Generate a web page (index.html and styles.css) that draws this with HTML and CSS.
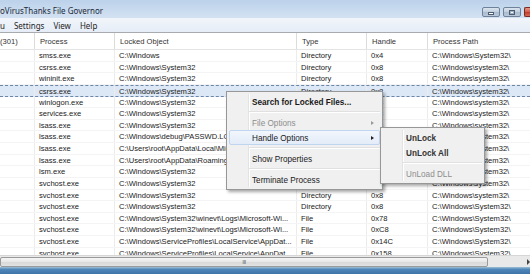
FILE: index.html
```html
<!DOCTYPE html>
<html lang="en">
<head>
    <meta charset="UTF-8">
    <title>VirusThanks File Governor</title>
    <link rel="stylesheet" href="styles.css">
</head>
<body>
    <div class="window">
        <div class="titlebar">
            <span class="title">oVirusThanks File Governor</span>
            <div class="winbtns">
                <span class="winbtn min"><i></i></span>
                <span class="winbtn max"><i></i></span>
                <span class="winbtn close"></span>
            </div>
        </div>
        <div class="menubar">
            <span class="menu-item first">u</span>
            <span class="menu-item">Settings</span>
            <span class="menu-item">View</span>
            <span class="menu-item">Help</span>
        </div>

        <div class="grid">
            <div class="row header">
                <span class="cell">(301)</span>
                <span class="cell">Process</span>
                <span class="cell">Locked Object</span>
                <span class="cell">Type</span>
                <span class="cell">Handle</span>
                <span class="cell">Process Path</span>
            </div>
            <div class="rows">
                <div class="row"><span class="cell"></span><span class="cell">smss.exe</span><span class="cell">C:\Windows</span><span class="cell">Directory</span><span class="cell">0x4</span><span class="cell">C:\Windows\System32\</span></div>
                <div class="row"><span class="cell"></span><span class="cell">csrss.exe</span><span class="cell">C:\Windows\System32</span><span class="cell">Directory</span><span class="cell">0x8</span><span class="cell">C:\Windows\system32\</span></div>
                <div class="row"><span class="cell"></span><span class="cell">wininit.exe</span><span class="cell">C:\Windows\System32</span><span class="cell">Directory</span><span class="cell">0x8</span><span class="cell">C:\Windows\system32\</span></div>
                <div class="row selected"><span class="cell"></span><span class="cell">csrss.exe</span><span class="cell">C:\Windows\System32</span><span class="cell">Directory</span><span class="cell">0x8</span><span class="cell">C:\Windows\system32\</span></div>
                <div class="row"><span class="cell"></span><span class="cell">winlogon.exe</span><span class="cell">C:\Windows\System32</span><span class="cell">Directory</span><span class="cell">0x8</span><span class="cell">C:\Windows\system32\</span></div>
                <div class="row"><span class="cell"></span><span class="cell">services.exe</span><span class="cell">C:\Windows\System32</span><span class="cell">Directory</span><span class="cell">0x8</span><span class="cell">C:\Windows\system32\</span></div>
                <div class="row"><span class="cell"></span><span class="cell">lsass.exe</span><span class="cell">C:\Windows\System32</span><span class="cell">Directory</span><span class="cell">0x8</span><span class="cell">C:\Windows\system32\</span></div>
                <div class="row"><span class="cell"></span><span class="cell">lsass.exe</span><span class="cell">C:\Windows\debug\PASSWD.LOG</span><span class="cell">File</span><span class="cell">0x1C</span><span class="cell">C:\Windows\system32\</span></div>
                <div class="row"><span class="cell"></span><span class="cell">lsass.exe</span><span class="cell">C:\Users\root\AppData\Local\Microsoft</span><span class="cell">Directory</span><span class="cell">0x2C</span><span class="cell">C:\Windows\system32\</span></div>
                <div class="row"><span class="cell"></span><span class="cell">lsass.exe</span><span class="cell">C:\Users\root\AppData\Roaming\Microsoft</span><span class="cell">Directory</span><span class="cell">0x30</span><span class="cell">C:\Windows\system32\</span></div>
                <div class="row"><span class="cell"></span><span class="cell">lsm.exe</span><span class="cell">C:\Windows\System32</span><span class="cell">Directory</span><span class="cell">0x8</span><span class="cell">C:\Windows\system32\</span></div>
                <div class="row"><span class="cell"></span><span class="cell">svchost.exe</span><span class="cell">C:\Windows\System32</span><span class="cell">Directory</span><span class="cell">0x8</span><span class="cell">C:\Windows\system32\</span></div>
                <div class="row"><span class="cell"></span><span class="cell">svchost.exe</span><span class="cell">C:\Windows\System32</span><span class="cell">Directory</span><span class="cell">0x8</span><span class="cell">C:\Windows\system32\</span></div>
                <div class="row"><span class="cell"></span><span class="cell">svchost.exe</span><span class="cell">C:\Windows\System32</span><span class="cell">Directory</span><span class="cell">0x8</span><span class="cell">C:\Windows\System32\</span></div>
                <div class="row"><span class="cell"></span><span class="cell">svchost.exe</span><span class="cell">C:\Windows\System32\winevt\Logs\Microsoft-Wi...</span><span class="cell">File</span><span class="cell">0x78</span><span class="cell">C:\Windows\System32\</span></div>
                <div class="row"><span class="cell"></span><span class="cell">svchost.exe</span><span class="cell">C:\Windows\System32\winevt\Logs\Microsoft-Wi...</span><span class="cell">File</span><span class="cell">0xC8</span><span class="cell">C:\Windows\System32\</span></div>
                <div class="row"><span class="cell"></span><span class="cell">svchost.exe</span><span class="cell">C:\Windows\ServiceProfiles\LocalService\AppDat...</span><span class="cell">File</span><span class="cell">0x14C</span><span class="cell">C:\Windows\System32\</span></div>
                <div class="row"><span class="cell"></span><span class="cell">svchost.exe</span><span class="cell">C:\Windows\ServiceProfiles\LocalService\AppDat...</span><span class="cell">File</span><span class="cell">0x158</span><span class="cell">C:\Windows\System32\</span></div>
            </div>
        </div>

        <div class="hscroll">
            <div class="thumb"><span class="grip">III</span></div>
            <span class="arrow-right"></span>
        </div>
        <div class="taskbar"></div>
    </div>

    <!-- Контекстное меню -->
    <div class="ctxmenu">
        <div class="ctx-item bold">Search for Locked Files...</div>
        <div class="ctx-sep"></div>
        <div class="ctx-item disabled">File Options<span class="sub-arrow"></span></div>
        <div class="ctx-item active">Handle Options<span class="sub-arrow"></span></div>
        <div class="ctx-sep"></div>
        <div class="ctx-item">Show Properties</div>
        <div class="ctx-sep"></div>
        <div class="ctx-item">Terminate Process</div>
    </div>

    <div class="ctxmenu submenu">
        <div class="ctx-item semibold">UnLock</div>
        <div class="ctx-item semibold">UnLock All</div>
        <div class="ctx-sep"></div>
        <div class="ctx-item disabled">UnLoad DLL</div>
    </div>
</body>
</html>
```

FILE: styles.css
```css
:root {
    --row-h: 11.625px;
    --grid-line: #ececec;
    --text: #1a1a1a;
}

* {
    box-sizing: border-box;
    margin: 0;
    padding: 0;
}

body {
    width: 530px;
    height: 274px;
    overflow: hidden;
    font-family: "Liberation Sans", Arial, sans-serif;
    color: var(--text);
    background: #fff;
}

.window {
    display: flex;
    flex-direction: column;
    height: 274px;
}

/* Заголовок окна */
.titlebar {
    height: 18px;
    display: flex;
    align-items: center;
    justify-content: space-between;
    background: linear-gradient(to bottom, #bcd2ea 0%, #c9dbef 60%, #d3e2f2 100%);
    font-family: "Noto Sans", "Liberation Sans", sans-serif;
    font-size: 8px;
    color: #1e2a3a;
    padding-top: 4px;
}

.title {
    line-height: 14px;
}

.winbtns {
    display: flex;
    align-items: center;
    gap: 3px;
    padding-top: 2px;
}

.winbtn {
    width: 18px;
    height: 10px;
    border: 1px solid #6f8299;
    border-radius: 2px;
    background: linear-gradient(to bottom, #dbe5f0 0%, #bfcddd 50%, #a9bbcf 51%, #b9c9da 100%);
    display: flex;
    align-items: center;
    justify-content: center;
}

.winbtn.min i {
    width: 6px;
    height: 3px;
    margin-top: 3px;
    background: #fff;
    border: 1px solid #4d5c70;
}

.winbtn.max i {
    width: 6px;
    height: 5px;
    border: 1px solid #4d5c70;
    background: #fff;
    box-shadow: inset 0 0 0 1px #9fb0c4;
}

.winbtn.close {
    width: 6px;
    border-right: none;
    border-radius: 2px 0 0 2px;
    border-color: #7a2a22;
    background: linear-gradient(to bottom, #e59a8c 0%, #d05a45 50%, #c0392b 51%, #d26a52 100%);
}

/* Меню */
.menubar {
    height: 15px;
    display: flex;
    align-items: center;
    background: linear-gradient(to bottom, #f1f5fb 0%, #e6edf7 100%);
    font-family: "Noto Sans", "Liberation Sans", sans-serif;
    font-size: 8px;
    color: #1e1e1e;
    border-bottom: 1px solid #a7abb0;
}

.menu-item {
    padding: 0 4px 0 5px;
}

.menu-item.first {
    padding: 0 4px 0 0;
}

/* Таблица */
.grid {
    height: 222px;
    overflow: hidden;
    font-size: 7.6px;
}

.row {
    display: grid;
    grid-template-columns: 35px 80px 182px 70px 61px 120px;
    height: var(--row-h);
    line-height: var(--row-h);
    white-space: nowrap;
}

.cell {
    overflow: hidden;
    padding-left: 4px;
    border-right: 1px solid var(--grid-line);
    color: #222;
}

.row.header {
    height: 17px;
    line-height: 17px;
    background: #fff;
    border-bottom: 1px solid #e4e4e4;
}

.row.header .cell {
    border-right: 1px solid #dcdcdc;
    color: #333;
    padding-left: 5px;
}

.row.header .cell:first-child {
    padding-left: 0;
}

.rows .row {
    border-bottom: 1px solid #f4f4f4;
}

.row.selected {
    background: #dde8f6;
    border-top: 1px dashed #6d86a8;
    border-bottom: 1px dashed #6d86a8 !important;
}

/* Горизонтальная прокрутка */
.hscroll {
    height: 12px;
    display: flex;
    align-items: center;
    background: #e9e9e9;
    border-top: 1px solid #d6d6d6;
    position: relative;
}

.thumb {
    width: 488px;
    height: 10px;
    border: 1px solid #9a9a9a;
    border-radius: 2px;
    background: linear-gradient(to bottom, #f6f6f6 0%, #e6e6e6 50%, #d9d9d9 51%, #e2e2e2 100%);
    display: flex;
    align-items: center;
    justify-content: center;
}

.grip {
    font-size: 6px;
    letter-spacing: -0.5px;
    color: #666;
    line-height: 6px;
}

.arrow-right {
    margin-left: auto;
    margin-right: 0;
    width: 0;
    height: 0;
    border-top: 3px solid transparent;
    border-bottom: 3px solid transparent;
    border-left: 3px solid #444;
}

.taskbar {
    flex: 1;
    background: linear-gradient(to bottom, #9cc0d8 0%, #4f86b8 35%, #3e73a8 100%);
}

/* Контекстное меню */
.ctxmenu {
    position: absolute;
    left: 226px;
    top: 91px;
    width: 157px;
    padding: 2px;
    background: #f0f0f0;
    border: 1px solid #979797;
    box-shadow: 2px 2px 3px rgba(0, 0, 0, 0.35);
    font-family: "Liberation Sans", Arial, sans-serif;
    font-size: 8.2px;
    color: #1a1a1a;
}

.ctxmenu::before {
    content: "";
    position: absolute;
    top: 2px;
    bottom: 2px;
    left: 21px;
    width: 1px;
    background: #e2e3e3;
    box-shadow: 1px 0 0 #fff;
}

.ctx-item {
    position: relative;
    height: 15px;
    line-height: 15px;
    padding-left: 22px;
    border: 1px solid transparent;
    border-radius: 2px;
}

.ctx-item.bold {
    font-weight: bold;
}

.ctx-item.semibold {
    font-weight: bold;
    color: #333;
}

.ctx-item.disabled {
    color: #8d8d8d;
}

.ctx-item.active {
    background: linear-gradient(to bottom, #f2f6fc 0%, #e3ecf8 100%);
    border-color: #c0d5ef;
}

.ctx-sep {
    height: 6px;
    margin-left: 20px;
    position: relative;
}

.ctx-sep::after {
    content: "";
    position: absolute;
    left: 0;
    right: 0;
    top: 2px;
    height: 1px;
    background: #e0e0e0;
    border-bottom: 1px solid #fff;
}

.sub-arrow {
    position: absolute;
    right: 5px;
    top: 5px;
    width: 0;
    height: 0;
    border-top: 2.5px solid transparent;
    border-bottom: 2.5px solid transparent;
    border-left: 3px solid #222;
}

.ctx-item.disabled .sub-arrow {
    border-left-color: #9a9a9a;
}

.submenu {
    left: 380px;
    top: 127px;
    width: 105px;
}
```
